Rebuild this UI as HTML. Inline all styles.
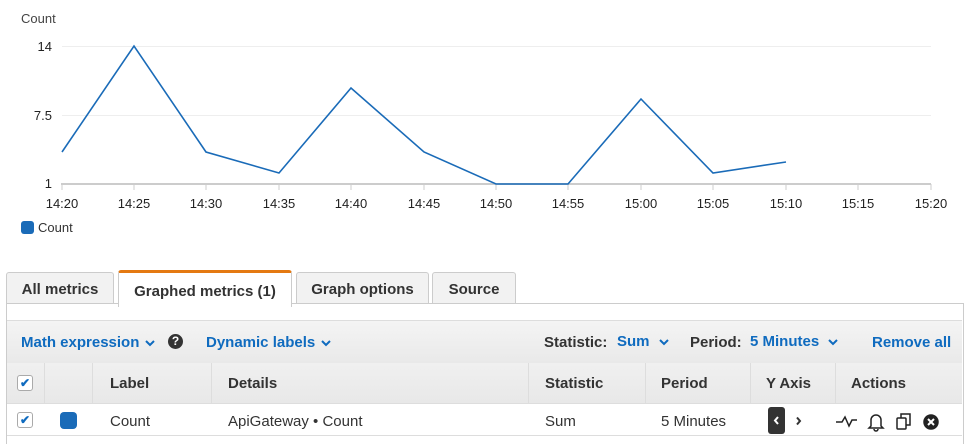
<!DOCTYPE html>
<html><head><style>
body{margin:0;width:970px;height:443px;background:#fff;font-family:"Liberation Sans",Arial,sans-serif;position:relative;overflow:hidden;color:#16191f}
.a{position:absolute}
.tab{position:absolute;top:272px;height:31px;background:#f2f2f2;border:1px solid #ccc;border-bottom:none;border-radius:3px 3px 0 0;font-weight:bold;font-size:15px;line-height:33px;text-align:center;color:#333}
.blue{color:#0f6bbf;font-weight:bold;font-size:15px}
.th{position:absolute;top:364px;height:40px;line-height:40px;font-weight:bold;font-size:15px;color:#333}
.td{position:absolute;top:404px;height:33px;line-height:36px;font-size:15px;color:#333}
.vl{position:absolute;top:363px;height:40px;width:1px;background:#ddd}
.cb{position:absolute;width:14px;height:14px;border:1px solid #aaa;border-radius:3px;background:#fff;font-size:12px;line-height:14px;text-align:center;color:#0f6bbf;font-weight:bold}
.ch{display:inline-block;vertical-align:middle;margin-left:6px}
</style></head><body>
<div class="a" style="left:21px;top:11px;font-size:13px;color:#444">Count</div>
<svg class="a" style="left:0;top:0" width="970" height="250">
<g stroke="#eee" stroke-width="1"><line x1="62" y1="46.5" x2="931" y2="46.5"/><line x1="62" y1="115.5" x2="931" y2="115.5"/></g>
<line x1="61" y1="184" x2="931" y2="184" stroke="#ccc" stroke-width="2"/>
<g stroke="#ccc"><line x1="62" y1="184" x2="62" y2="190"/><line x1="134" y1="184" x2="134" y2="190"/><line x1="206" y1="184" x2="206" y2="190"/><line x1="279" y1="184" x2="279" y2="190"/><line x1="351" y1="184" x2="351" y2="190"/><line x1="424" y1="184" x2="424" y2="190"/><line x1="496" y1="184" x2="496" y2="190"/><line x1="568" y1="184" x2="568" y2="190"/><line x1="641" y1="184" x2="641" y2="190"/><line x1="713" y1="184" x2="713" y2="190"/><line x1="786" y1="184" x2="786" y2="190"/><line x1="858" y1="184" x2="858" y2="190"/><line x1="931" y1="184" x2="931" y2="190"/></g>
<g font-size="13" fill="#222" text-anchor="end"><text x="52" y="51">14</text><text x="52" y="120">7.5</text><text x="52" y="188">1</text></g>
<g font-size="13" fill="#222" text-anchor="middle"><text x="62" y="208">14:20</text><text x="134" y="208">14:25</text><text x="206" y="208">14:30</text><text x="279" y="208">14:35</text><text x="351" y="208">14:40</text><text x="424" y="208">14:45</text><text x="496" y="208">14:50</text><text x="568" y="208">14:55</text><text x="641" y="208">15:00</text><text x="713" y="208">15:05</text><text x="786" y="208">15:10</text><text x="858" y="208">15:15</text><text x="931" y="208">15:20</text></g>
<polyline fill="none" stroke="#1a6bb8" stroke-width="1.6" points="62,152 134,46 206,152 279,173 351,88 424,152 496,184 568,184 641,99 713,173 786,162"/>
<rect x="21" y="221" width="13" height="13" rx="3" fill="#1a6bb8"/>
<text x="38" y="232" font-size="13" fill="#333">Count</text>
<text x="484" y="262" font-size="9" fill="#999" text-anchor="middle">---</text>
</svg>
<div class="tab" style="left:6px;width:106px">All metrics</div>
<div class="tab" style="left:118px;width:172px;background:#fff;border-top:3px solid #e47911;top:270px;height:34px;line-height:38px;z-index:2">Graphed metrics (1)</div>
<div class="tab" style="left:296px;width:131px">Graph options</div>
<div class="tab" style="left:432px;width:82px">Source</div>
<div class="a" style="left:6px;top:303px;width:956px;height:140px;border:1px solid #ccc;border-bottom:none"></div>
<div class="a" style="left:7px;top:320px;width:955px;height:42px;background:linear-gradient(#f4f4f4,#e9e9e9);border-top:1px solid #ddd;border-bottom:1px solid #ddd"></div>
<div class="a blue" style="left:21px;top:334px">Math expression<svg class="ch" width="10" height="7"><path d="M1 1 L5 5 L9 1" fill="none" stroke="#0f6bbf" stroke-width="2"/></svg></div>
<div class="a" style="left:168px;top:334px;width:15px;height:15px;border-radius:50%;background:#333;color:#fff;font-size:12px;font-weight:bold;text-align:center;line-height:15px">?</div>
<div class="a blue" style="left:206px;top:334px">Dynamic labels<svg class="ch" width="10" height="7"><path d="M1 1 L5 5 L9 1" fill="none" stroke="#0f6bbf" stroke-width="2"/></svg></div>
<div class="a" style="left:544px;top:334px;font-weight:bold;font-size:15px;color:#333">Statistic:</div>
<div class="a blue" style="left:617px;top:333px">Sum<svg class="ch" style="margin-left:9px" width="10" height="7"><path d="M1 1 L5 5 L9 1" fill="none" stroke="#0f6bbf" stroke-width="2"/></svg></div>
<div class="a" style="left:690px;top:334px;font-weight:bold;font-size:15px;color:#333">Period:</div>
<div class="a blue" style="left:750px;top:333px">5 Minutes<svg class="ch" style="margin-left:9px" width="10" height="7"><path d="M1 1 L5 5 L9 1" fill="none" stroke="#0f6bbf" stroke-width="2"/></svg></div>
<div class="a blue" style="left:872px;top:334px">Remove all</div>
<div class="a" style="left:7px;top:363px;width:955px;height:40px;background:linear-gradient(#f0f0f0,#e8e8e8);border-bottom:1px solid #ddd"></div>
<div class="vl" style="left:44px"></div><div class="vl" style="left:92px"></div><div class="vl" style="left:211px"></div><div class="vl" style="left:528px"></div><div class="vl" style="left:645px"></div><div class="vl" style="left:750px"></div><div class="vl" style="left:835px"></div>
<div class="cb" style="left:17px;top:375px">✔</div>
<div class="th" style="left:110px">Label</div><div class="th" style="left:228px">Details</div><div class="th" style="left:545px">Statistic</div><div class="th" style="left:661px">Period</div><div class="th" style="left:766px">Y Axis</div><div class="th" style="left:851px">Actions</div>
<div class="cb" style="left:17px;top:412px">✔</div>
<div class="a" style="left:60px;top:412px;width:17px;height:17px;border-radius:4px;background:#1a6bb8"></div>
<div class="td" style="left:110px">Count</div><div class="td" style="left:228px">ApiGateway • Count</div><div class="td" style="left:545px">Sum</div><div class="td" style="left:661px">5 Minutes</div>
<div class="a" style="left:768px;top:407px;width:17px;height:27px;background:#333;border-radius:3px"><svg width="17" height="27"><path d="M10 10 L7 13.5 L10 17" fill="none" stroke="#fff" stroke-width="2"/></svg></div>
<svg class="a" style="left:794px;top:414px" width="10" height="14"><path d="M3 3.5 L6 7 L3 10.5" fill="none" stroke="#333" stroke-width="2"/></svg>
<svg class="a" style="left:834px;top:410px" width="110" height="22" fill="none" stroke="#222" stroke-width="1.5">
<polyline points="2,12 8,12 11,7 15,16 18,10 23,10"/>
<path d="M37 16 V10 a5 5 0 0 1 10 0 V16 l2 2 H35 Z M40 19 a2 2 0 0 0 4 0"/>
<rect x="63" y="8" width="9" height="11" rx="1"/><path d="M67 8 V4 h9 v11 h-4"/>
<circle cx="97" cy="12" r="7" fill="#222"/><path d="M94 9 l6 6 M100 9 l-6 6" stroke="#fff" stroke-width="2"/>
</svg>
<div class="a" style="left:7px;top:435px;width:955px;height:1px;background:#ddd"></div>
</body></html>
